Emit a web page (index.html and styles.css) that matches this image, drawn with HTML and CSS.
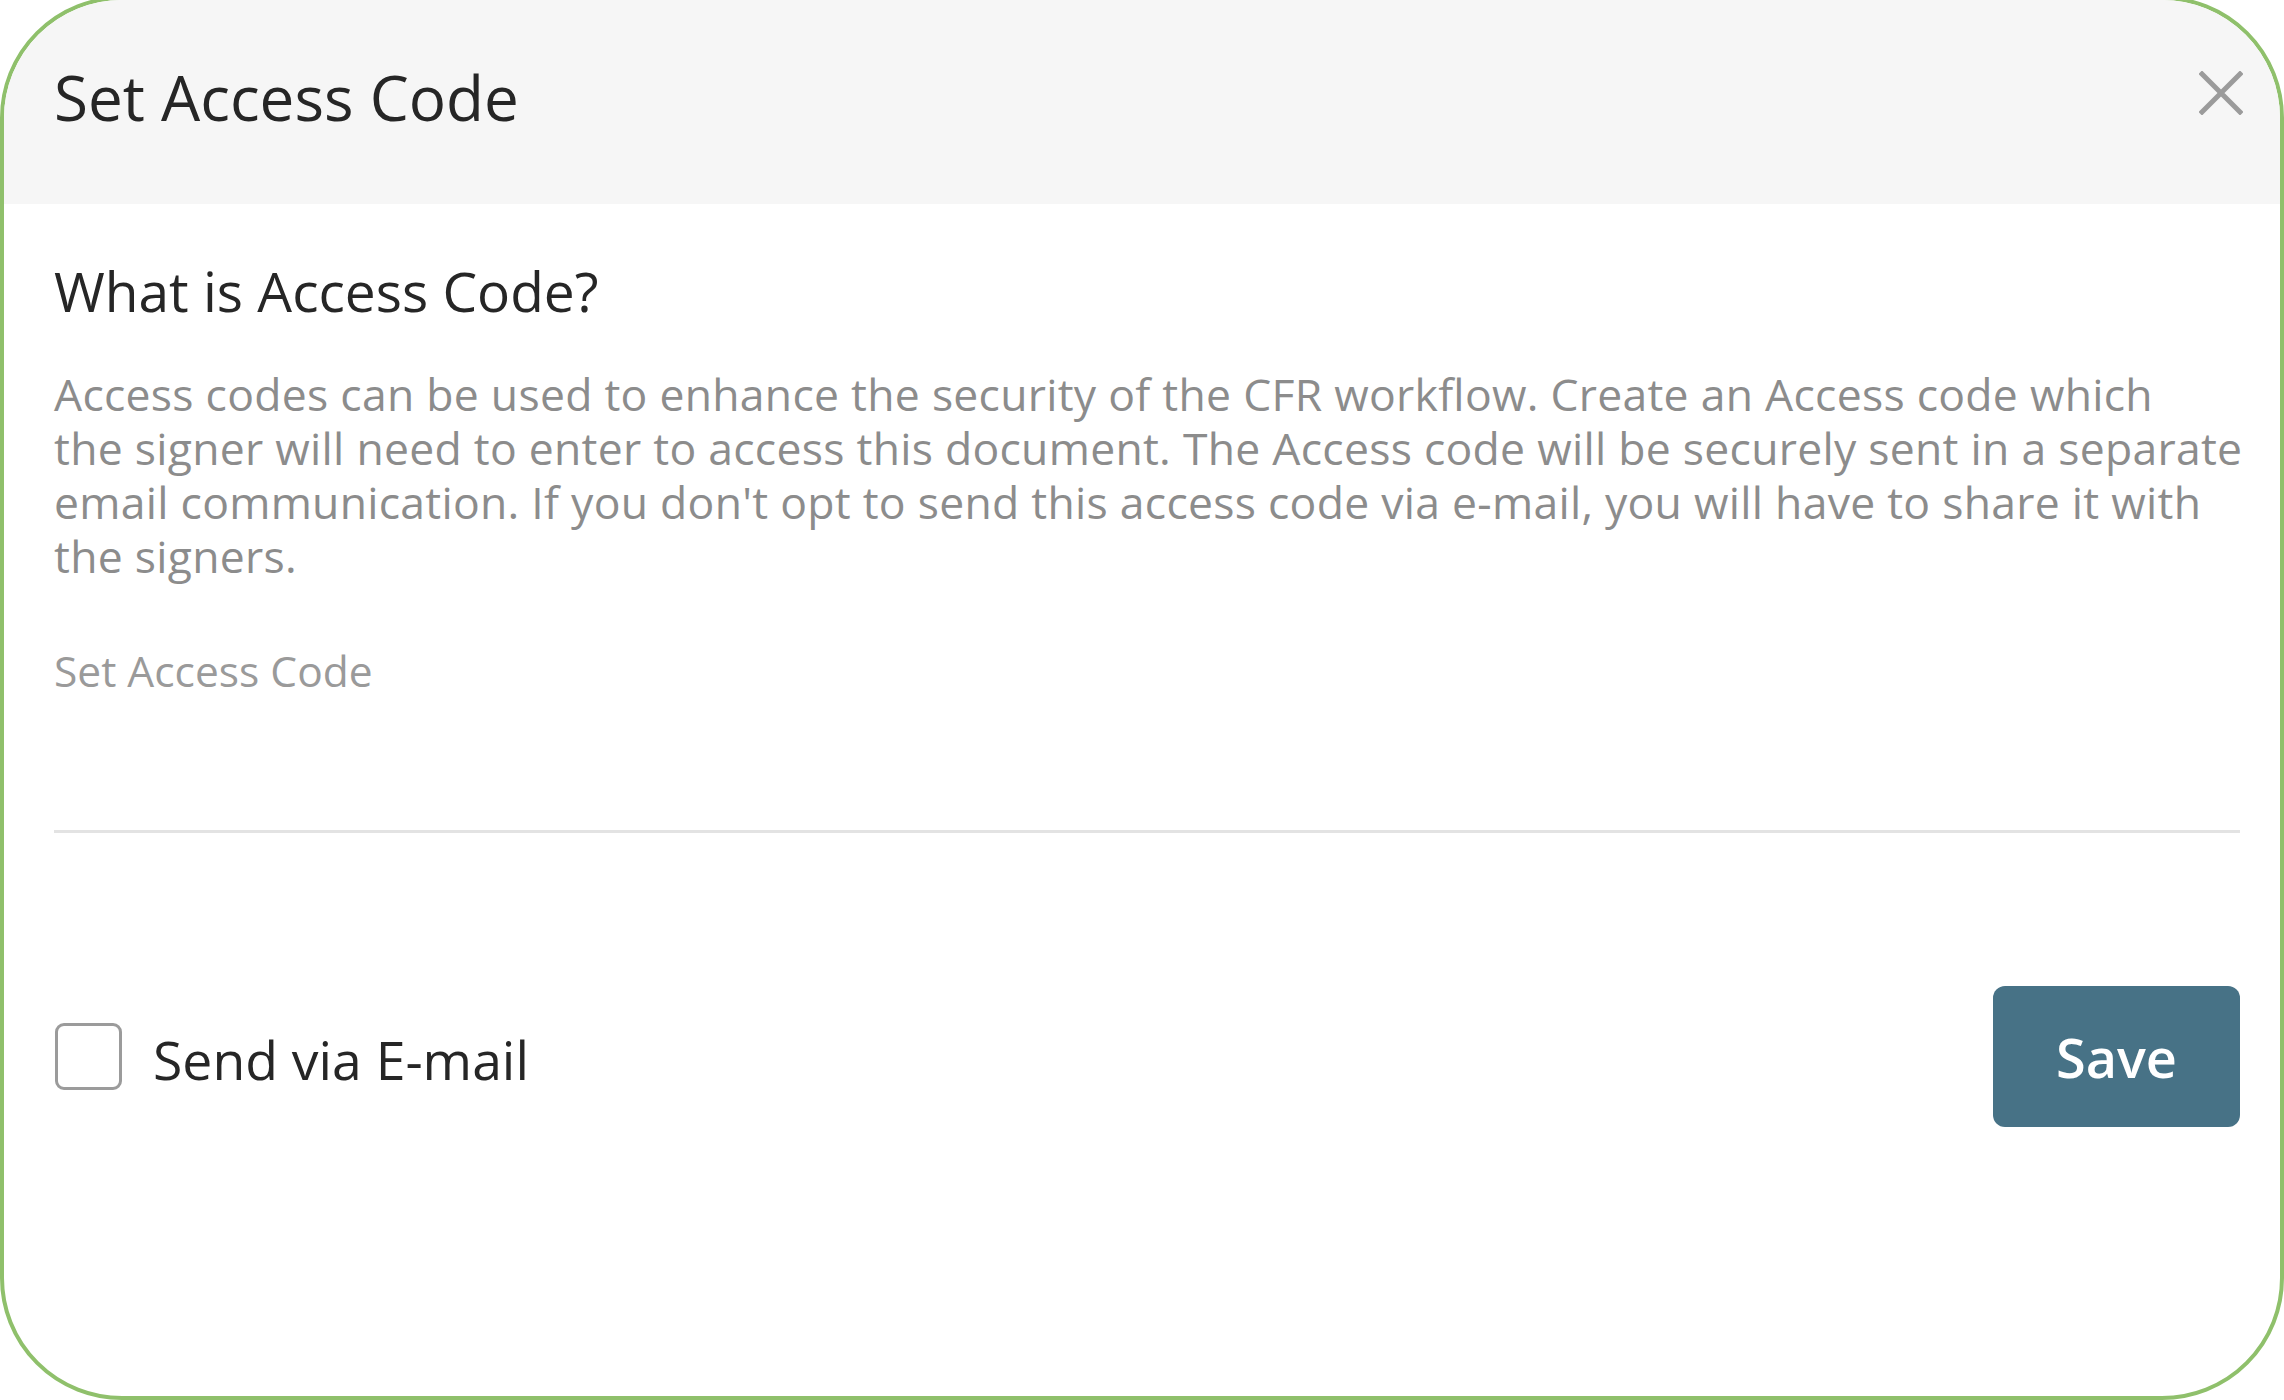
FILE: index.html
```html
<!DOCTYPE html>
<html lang="en">
<head>
<meta charset="utf-8">
<title>Set Access Code</title>
<link rel="stylesheet" href="styles.css">
</head>
<body>
<div class="frame">
  <header class="modal-header">
    <h1 class="modal-title">Set Access Code</h1>
    <button class="close-btn" aria-label="Close">
      <svg viewBox="0 0 44 44" width="44" height="44"><path d="M3 3 L41 41 M41 3 L3 41" stroke="#9b9b9b" stroke-width="5" stroke-linecap="square" fill="none"/></svg>
    </button>
  </header>
  <main class="modal-body">
    <h2 class="section-title">What is Access Code?</h2>
    <p class="desc">Access codes can be used to enhance the security of the CFR workflow. Create an Access code which<br>the signer will need to enter to access this document. The Access code will be securely sent in a separate<br>email communication. If you don't opt to send this access code via e-mail, you will have to share it with<br>the signers.</p>
    <label class="field">
      <span class="field-label">Set Access Code</span>
      <span class="field-input"></span>
    </label>
    <div class="actions">
      <label class="check">
        <span class="check-box"></span>
        <span class="check-text">Send via E-mail</span>
      </label>
      <button class="save-btn">Save</button>
    </div>
  </main>
</div>
</body>
</html>
```

FILE: styles.css
```css
html, body {
  margin: 0;
  padding: 0;
  background: #ffffff;
  overflow: hidden;
}
body {
  font-family: "Open Sans", "Liberation Sans", sans-serif;
  width: 2284px;
  height: 1400px;
}
.frame {
  box-sizing: border-box;
  width: 2284px;
  height: 1404px;
  margin-top: -4px;
  border: 4px solid #8fc06b;
  border-radius: 122px;
  overflow: hidden;
  background: #ffffff;
  display: flex;
  flex-direction: column;
}
.modal-header {
  height: 204px;
  flex: 0 0 auto;
  background: #f6f6f6;
  display: flex;
  align-items: center;
  justify-content: space-between;
  padding: 0 37px 8px 50px;
  box-sizing: border-box;
}
.modal-title {
  margin: 0;
  font-size: 62px;
  font-weight: 400;
  color: #262626;
  line-height: 1;
  margin-top: -2px;
}
.close-btn {
  border: 0;
  background: transparent;
  padding: 0;
  width: 44px;
  height: 44px;
  display: flex;
  margin-top: -10px;
}
.modal-body {
  padding: 54px 40px 0 50px;
  display: flex;
  flex-direction: column;
}
.section-title {
  margin: 0;
  font-size: 55px;
  line-height: 66px;
  font-weight: 400;
  color: #262626;
}
.desc {
  margin: 43px 0 0 0;
  font-size: 44.5px;
  letter-spacing: 0.27px;
  line-height: 54px;
  color: #8c8c8c;
  white-space: nowrap;
}
.field {
  display: flex;
  flex-direction: column;
  margin-top: 62px;
}
.field-label {
  font-size: 42.5px;
  line-height: 52px;
  color: #9a9a9a;
}
.field-input {
  height: 133px;
  border-bottom: 3px solid #e3e3e3;
}
.actions {
  margin-top: 153px;
  display: flex;
  align-items: center;
  justify-content: space-between;
}
.check {
  display: flex;
  align-items: center;
  gap: 31px;
}
.check-box {
  box-sizing: border-box;
  width: 67px;
  height: 67px;
  border: 3px solid #9b9b9b;
  border-radius: 9px;
  margin-left: 1px;
}
.check-text {
  font-size: 53.5px;
  color: #262626;
  line-height: 1;
  margin-top: 6px;
}
.save-btn {
  width: 247px;
  height: 141px;
  border: 0;
  border-radius: 12px;
  background: #477286;
  color: #ffffff;
  font-family: "Open Sans", "Liberation Sans", sans-serif;
  font-size: 54px;
  font-weight: 600;
  padding: 0;
}
```
